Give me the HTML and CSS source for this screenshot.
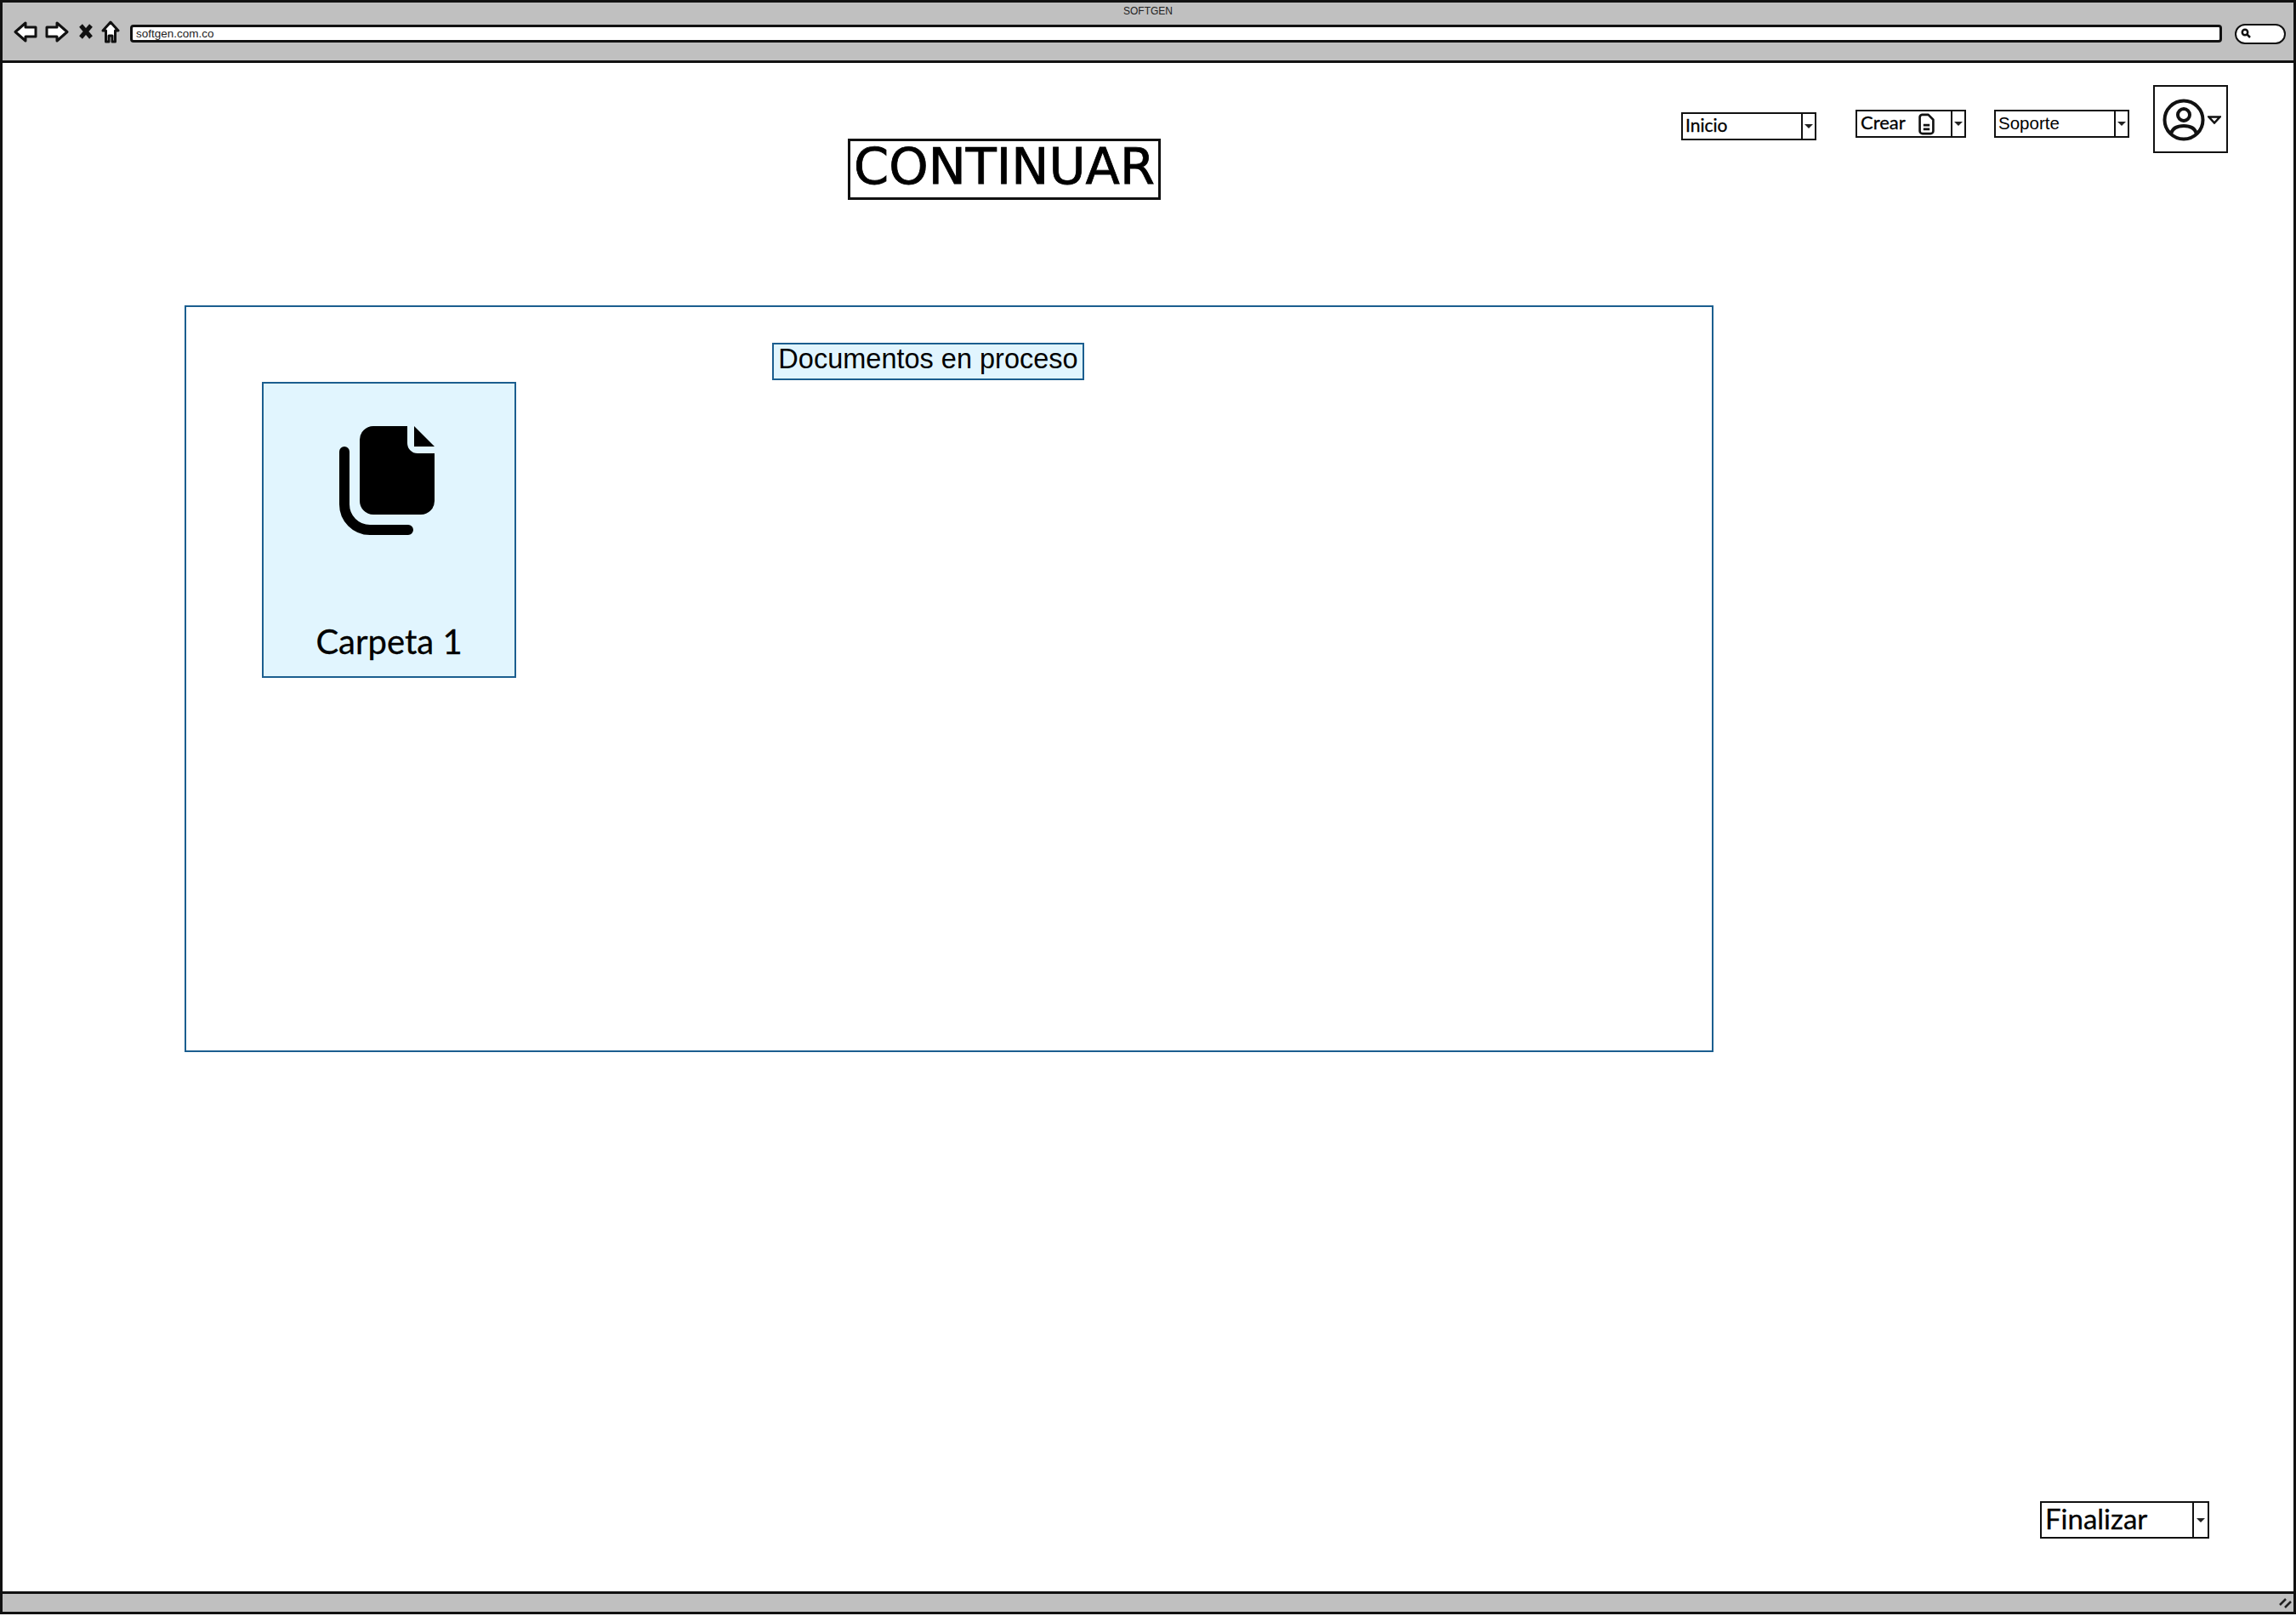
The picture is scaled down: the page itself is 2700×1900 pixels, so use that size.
FILE: index.html
```html
<!DOCTYPE html>
<html lang="es">
<head>
  <meta charset="UTF-8" />
  <title>SOFTGEN</title>
  <link rel="stylesheet" href="styles.css">
</head>
<body>
  <div class="window">
    <div class="chrome">
      <div class="chrome-title">SOFTGEN</div>
      <div class="chrome-bar">
        <svg class="nav-icon back" viewBox="0 0 28 25"><path d="M2 12.5 14 2V7H26V18H14V23Z"/></svg>
        <svg class="nav-icon forward" viewBox="0 0 28 25"><path d="M26 12.5 14 2V7H2V18H14V23Z"/></svg>
        <svg class="nav-icon stop" viewBox="0 0 16 18"><path d="M2 2 14 16M14 2 2 16"/></svg>
        <svg class="nav-icon home" viewBox="0 0 22 27"><path d="M11 2 20 12H16.500V25H13V18H9V25H5.500V12H2Z"/></svg>
        <div class="address">softgen.com.co</div>
        <div class="search">
          <svg class="search-icon" viewBox="0 0 12 12"><circle cx="5" cy="5" r="3.2"/><path d="M7.5 7.5 11 11"/></svg>
        </div>
      </div>
    </div>

    <div class="content">
      <div class="top-row">
        <h1 class="title">CONTINUAR</h1>

        <div class="combo combo-inicio">
          <span class="combo-label round">Inicio</span>
          <span class="combo-btn"><i class="caret"></i></span>
        </div>

        <div class="combo combo-crear">
          <span class="combo-label round">Crear
            <svg class="doc-icon" viewBox="0 0 18 24"><path d="M4 1.500H11L16.500 7V19.500A3 3 0 0 1 13.500 22.500H4.500A3 3 0 0 1 1.500 19.500V4A3 3 0 0 1 4 1.500ZM5.500 13H12.500M5.500 17.500H12.500"/></svg>
          </span>
          <span class="combo-btn"><i class="caret"></i></span>
        </div>

        <div class="combo combo-soporte">
          <span class="combo-label">Soporte</span>
          <span class="combo-btn"><i class="caret"></i></span>
        </div>

        <div class="profile">
          <svg class="profile-icon" viewBox="0 0 50 50">
            <circle cx="25" cy="25" r="22.500"/>
            <circle cx="25" cy="19" r="7"/>
            <path d="M10 41C12 34 18 32 25 32S38 34 40 41"/>
          </svg>
          <svg class="profile-caret" viewBox="0 0 16 10"><path d="M1.500 1.500H14.500L8 8.500Z"/></svg>
        </div>
      </div>

      <section class="panel">
        <h2 class="panel-title">Documentos en proceso</h2>
        <div class="folder">
          <svg class="folder-icon" viewBox="0 0 112 128">
            <path d="M40 0H80V20A12 12 0 0 0 92 32H112V88A16 16 0 0 1 96 104H40A16 16 0 0 1 24 88V16A16 16 0 0 1 40 0Z"/>
            <path d="M88 0 112 24H88Z"/>
            <path class="folder-back" d="M6 30V92A30 30 0 0 0 36 122H81"/>
          </svg>
          <div class="folder-name round">Carpeta 1</div>
        </div>
      </section>

      <div class="combo combo-finalizar">
        <span class="combo-label round">Finalizar</span>
        <span class="combo-btn"><i class="caret"></i></span>
      </div>
    </div>

    <div class="status">
      <svg class="grip" viewBox="0 0 16 14"><path d="M1 9 8 2M7 12 14 5"/></svg>
    </div>
  </div>
</body>
</html>
```

FILE: styles.css
```css
* {
  box-sizing: border-box;
}
body {
  margin: 0;
  background: #fff;
  font-family: "Liberation Sans", Arial, sans-serif;
  color: #000;
}
.window {
  width: 2700px;
  height: 1898px;
  border: 3px solid #111;
  display: flex;
  flex-direction: column;
}
.round {
  font-family: "Lato", "Liberation Sans", sans-serif;
  -webkit-text-stroke: 0.3px #000;
}

/* browser bar */
.chrome {
  height: 71px;
  background: #c0c0c0;
  border-bottom: 3px solid #111;
}
.chrome-title {
  text-align: center;
  font-size: 12px;
  line-height: 14px;
  padding-top: 3px;
  color: #222;
}
.chrome-bar {
  display: flex;
  align-items: center;
  padding: 0 9px 2px 13px;
  height: 36px;
}
.nav-icon {
  fill: #fff;
  stroke: #111;
  stroke-width: 3;
  stroke-linejoin: round;
  flex: none;
}
.back,
.forward {
  width: 28px;
  height: 25px;
}
.forward {
  margin-left: 9px;
}
.stop {
  width: 16px;
  height: 18px;
  margin-left: 12px;
  stroke-width: 5;
  fill: none;
}
.home {
  width: 22px;
  height: 27px;
  margin-left: 10px;
}
.address {
  flex: 1;
  height: 21px;
  margin: 5px 0 0 12px;
  background: #fff;
  border: 3px solid #111;
  border-radius: 4px;
  font-size: 13.500px;
  line-height: 15px;
  padding-left: 4px;
  color: #222;
}
.search {
  width: 60px;
  height: 24px;
  margin: 5px 0 0 15px;
  background: #fff;
  border: 2.500px solid #111;
  border-radius: 12px;
  padding: 3px 0 0 5px;
}
.search-icon {
  display: block;
  width: 12px;
  height: 12px;
  fill: none;
  stroke: #111;
  stroke-width: 2.500;
}

/* page */
.content {
  flex: 1;
  display: flex;
  flex-direction: column;
}
.top-row {
  display: flex;
  align-items: flex-start;
  padding-top: 26px;
  height: 161px;
}
.title {
  width: 368px;
  height: 72px;
  margin: 63px 0 0 994px;
  border: 3px solid #111;
  font-family: "DejaVu Sans", sans-serif;
  font-weight: 400;
  font-size: 59px;
  line-height: 60px;
  text-align: center;
  white-space: nowrap;
  -webkit-text-stroke: 0.8px #000;
}

/* dropdown with the small arrow box */
.combo {
  display: flex;
  border: 2.500px solid #111;
  background: #fff;
  flex: none;
}
.combo-label {
  flex: 1;
  display: flex;
  align-items: center;
  padding-left: 3px;
  font-size: 20px;
  white-space: nowrap;
}
.combo-btn {
  border-left: 2px solid #111;
  display: flex;
  align-items: center;
  justify-content: center;
}
.caret {
  width: 0;
  height: 0;
  border-left: 5px solid transparent;
  border-right: 5px solid transparent;
  border-top: 5px solid #222;
}
.combo-inicio {
  width: 159px;
  height: 33px;
  margin: 32px 0 0 612px;
}
.combo-inicio .combo-label {
  font-size: 21px;
  padding-bottom: 5px;
}
.combo-inicio .combo-btn,
.combo-soporte .combo-btn,
.combo-crear .combo-btn {
  width: 16px;
}
.combo-crear {
  width: 130px;
  height: 33px;
  margin: 29px 0 0 46px;
}
.combo-crear .combo-label {
  font-size: 22px;
  padding: 0 0 4px 4px;
}
.doc-icon {
  width: 19px;
  height: 26px;
  margin: 4px 0 0 15px;
  fill: none;
  stroke: #111;
  stroke-width: 2.500;
  stroke-linejoin: round;
}
.combo-soporte {
  width: 159px;
  height: 33px;
  margin: 29px 0 0 33px;
}
.combo-soporte .combo-label {
  font-size: 20.500px;
  padding-bottom: 1px;
}
.profile {
  width: 88px;
  height: 80px;
  margin-left: 28px;
  border: 2.500px solid #111;
  display: flex;
  align-items: center;
  padding: 2px 0 0 9px;
}
.profile-icon {
  width: 50px;
  height: 50px;
  fill: none;
  stroke: #111;
  stroke-width: 4;
}
.profile-caret {
  width: 16px;
  height: 10px;
  margin-left: 3px;
  fill: none;
  stroke: #111;
  stroke-width: 2.500;
}

/* documents panel */
.panel {
  width: 1798px;
  height: 878px;
  margin: 124px 0 0 214px;
  border: 2.500px solid #1b5e8f;
}
.panel-title {
  width: 367px;
  height: 44px;
  margin: 42px 0 0 689px;
  border: 2.500px solid #1b5e8f;
  background: #e1f5fe;
  font-size: 32.500px;
  font-weight: 400;
  line-height: 35px;
  text-align: center;
  white-space: nowrap;
}
.folder {
  width: 299px;
  height: 348px;
  margin: 2px 0 0 89px;
  border: 2.500px solid #1b5e8f;
  background: #e1f5fe;
  display: flex;
  flex-direction: column;
  align-items: center;
  padding-top: 50px;
}
.folder-icon {
  width: 112px;
  height: 128px;
  margin-right: 6px;
}
.folder-back {
  fill: none;
  stroke: #000;
  stroke-width: 12;
  stroke-linecap: round;
}
.folder-name {
  margin-top: 102px;
  font-size: 40px;
  line-height: 46px;
  white-space: nowrap;
}

/* bottom */
.combo-finalizar {
  width: 199px;
  height: 44px;
  margin: auto 99px 62px 0;
  align-self: flex-end;
}
.combo-finalizar .combo-label {
  font-size: 33px;
  padding: 0 0 5px 4px;
}
.combo-finalizar .combo-btn {
  width: 18px;
}
.status {
  height: 24px;
  background: #c0c0c0;
  border-top: 3px solid #111;
  display: flex;
  justify-content: flex-end;
  align-items: center;
  padding-right: 1px;
}
.grip {
  width: 16px;
  height: 14px;
  fill: none;
  stroke: #222;
  stroke-width: 2.500;
}
```
